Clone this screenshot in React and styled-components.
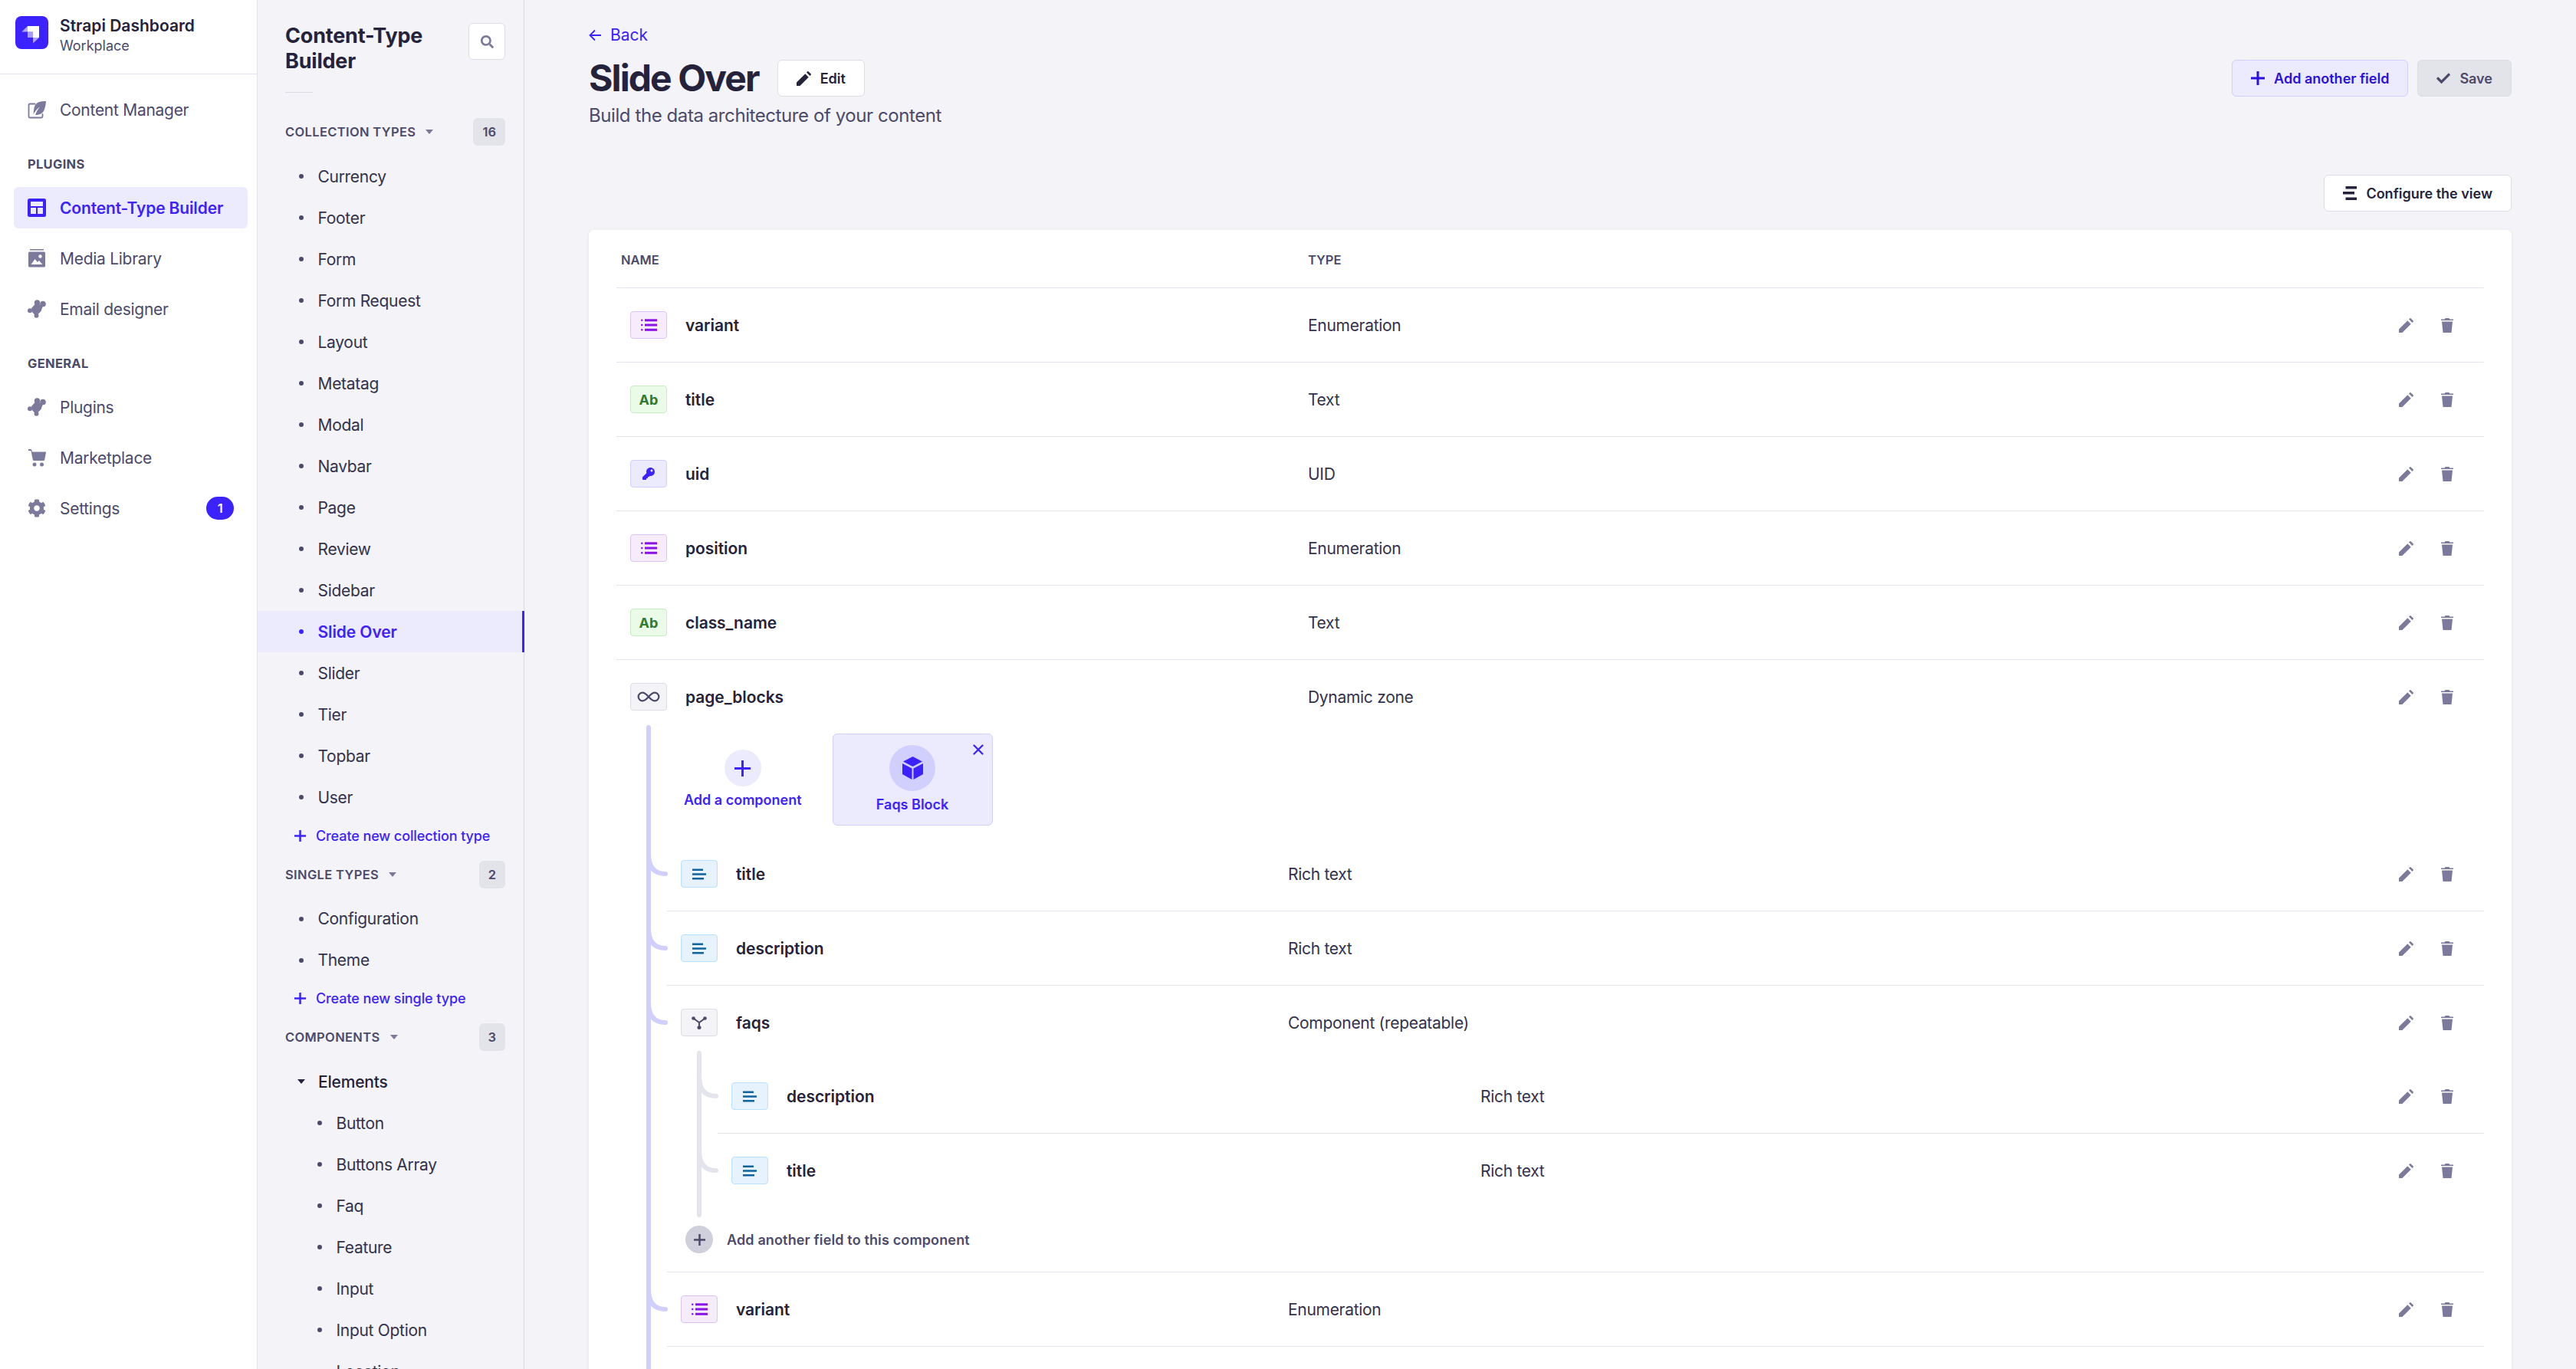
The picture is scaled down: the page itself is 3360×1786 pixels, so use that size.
import React from 'react';
import styled, { createGlobalStyle } from 'styled-components';
import { X, Infinity as InfinityIcon } from 'lucide-react';
import { FaSearch, FaKey, FaCog } from 'react-icons/fa';

const BLUE = '#3c22ff';
const INK = '#25233b';
const MUTED = '#4b4a6b';
const ICON = '#7c7a9c';
const LINE = '#e4e4ec';

const GlobalStyle = createGlobalStyle`
  html, body { margin: 0; height: 100%; overflow: hidden; }
  body { font-family: Inter, "Liberation Sans", sans-serif; color: ${INK}; background: #f3f3f8; }
  * { box-sizing: border-box; }
`;

const Page = styled.div`
  display: flex;
  height: 1786px;
  overflow: hidden;
`;

/* left nav */
const Nav = styled.nav`
  width: 336px;
  flex: none;
  background: #fff;
  border-right: 1px solid #e2e2ea;
`;

const Brand = styled.div`
  display: flex;
  align-items: center;
  gap: 15px;
  height: 97px;
  padding: 0 20px 11px;
  border-bottom: 1px solid ${LINE};
`;

const LogoBox = styled.div`
  width: 43px;
  height: 43px;
  border-radius: 8px;
  background: ${BLUE};
  svg { display: block; }
`;

const BrandText = styled.div`
  padding-top: 6px;
`;

const BrandName = styled.div`
  font-size: 21px;
  font-weight: 600;
  line-height: 28px;
`;

const BrandSub = styled.div`
  font-size: 18px;
  line-height: 24px;
  color: ${MUTED};
`;

const NavBody = styled.div`
  display: flex;
  flex-direction: column;
  gap: 12px;
  padding: 19px 12px 0 18px;
`;

const NavLabel = styled.div`
  font-size: 16.5px;
  font-weight: 700;
  line-height: 20px;
  letter-spacing: 0.3px;
  color: ${MUTED};
  padding-left: 18px;
  margin-top: 22px;
  margin-bottom: 8px;
`;

const NavItem = styled.div`
  display: flex;
  align-items: center;
  gap: 18px;
  height: 54px;
  padding: 0 18px;
  border-radius: 6px;
  font-size: 21px;
  letter-spacing: ${p => (p.$active ? '-0.15px' : '-0.28px')};
  font-weight: ${p => (p.$active ? 600 : 400)};
  color: ${p => (p.$active ? BLUE : MUTED)};
  background: ${p => (p.$active ? '#ebebfd' : 'transparent')};
  svg { flex: none; width: 24px; height: 24px; color: ${p => (p.$active ? BLUE : ICON)}; }
`;

const NavBadge = styled.span`
  margin-left: auto;
  width: 36px;
  height: 30px;
  border-radius: 15px;
  background: ${BLUE};
  color: #fff;
  font-size: 16.5px;
  font-weight: 600;
  display: flex;
  align-items: center;
  justify-content: center;
`;

/* content-type sub nav */
const SubNav = styled.aside`
  width: 348px;
  flex: none;
  border-right: 1px solid #dcdce4;
`;

const SubHead = styled.div`
  display: flex;
  justify-content: space-between;
  align-items: flex-start;
  padding: 30px 24px 0 36px;
`;

const SubTitle = styled.h2`
  margin: 0;
  font-size: 27px;
  line-height: 33px;
  font-weight: 700;
  letter-spacing: -0.2px;
`;

const SearchButton = styled.div`
  width: 48px;
  height: 48px;
  background: #fff;
  border: 1px solid #dcdce4;
  border-radius: 6px;
  display: flex;
  align-items: center;
  justify-content: center;
  color: ${ICON};
`;

const Rule = styled.div`
  width: 36px;
  height: 1px;
  background: #dcdce4;
  margin: 24px 0 33px 36px;
`;

const SectionHead = styled.div`
  display: flex;
  align-items: center;
  height: 36px;
  padding: 0 24px 0 36px;
  margin-bottom: 13px;
  font-size: 16.5px;
  font-weight: 600;
  letter-spacing: 0.35px;
  color: ${MUTED};
`;

const Caret = styled.span`
  width: 0;
  height: 0;
  margin-left: 13px;
  border-left: 5.5px solid transparent;
  border-right: 5.5px solid transparent;
  border-top: 6px solid ${p => (p.$dark ? INK : ICON)};
`;

const CountBadge = styled.span`
  margin-left: auto;
  min-width: 34px;
  padding: 0 12px;
  height: 36px;
  border-radius: 6px;
  background: #e3e3ea;
  font-size: 16.5px;
  font-weight: 600;
  letter-spacing: 0;
  display: flex;
  align-items: center;
  justify-content: center;
`;

const TypeItem = styled.div`
  display: flex;
  align-items: center;
  height: 54px;
  padding-left: ${p => p.$indent}px;
  font-size: 21px;
  letter-spacing: ${p => (p.$active ? '-0.1px' : '-0.3px')};
  font-weight: ${p => (p.$active ? 600 : 400)};
  color: ${p => (p.$active ? BLUE : '#32324d')};
  background: ${p => (p.$active ? '#ebebfd' : 'transparent')};
  border-right: ${p => (p.$active ? `3px solid ${BLUE}` : 'none')};
  margin-right: ${p => (p.$active ? '-1px' : '0')};
`;

const Bullet = styled.span`
  width: 6px;
  height: 6px;
  border-radius: 50%;
  margin-right: 18.5px;
  background: ${p => (p.$active ? BLUE : MUTED)};
`;

const CreateLink = styled.div`
  display: flex;
  align-items: center;
  gap: 13px;
  height: 30px;
  margin: 8px 0 17.5px;
  padding-left: 48px;
  font-size: 18px;
  font-weight: 500;
  letter-spacing: -0.1px;
  color: ${BLUE};
`;

const Group = styled.div`
  display: flex;
  align-items: center;
  height: 54px;
  padding-left: 52px;
  font-size: 21px;
  font-weight: 500;
  letter-spacing: -0.2px;
  span { margin: 0 17px 0 0; }
`;

/* main */
const Main = styled.main`
  flex: 1;
  min-width: 0;
  padding: 30px 84px 0;
`;

const BackLink = styled.div`
  display: flex;
  align-items: center;
  gap: 12px;
  height: 31px;
  font-size: 21px;
  color: ${BLUE};
`;

const TitleBar = styled.div`
  display: flex;
  align-items: center;
  gap: 24px;
  margin-top: 17px;
`;

const Title = styled.h1`
  margin: 0;
  font-size: 48px;
  line-height: 48px;
  font-weight: 700;
  letter-spacing: -1.9px;
`;

const Button = styled.div`
  display: flex;
  align-items: center;
  gap: 12px;
  height: 48px;
  padding: 0 24px;
  border-radius: 6px;
  border: 1px solid ${p => p.$border || '#dcdce4'};
  background: ${p => p.$bg || '#fff'};
  color: ${p => p.$color || INK};
  font-size: 18px;
  font-weight: 600;
  white-space: nowrap;
`;

const Actions = styled.div`
  margin-left: auto;
  display: flex;
  gap: 12px;
`;

const Subtitle = styled.div`
  margin-top: 8px;
  font-size: 24px;
  line-height: 34px;
  letter-spacing: -0.42px;
  color: ${MUTED};
`;

const ViewBar = styled.div`
  display: flex;
  justify-content: flex-end;
  margin: 60px 0 24px;
`;

const Card = styled.section`
  background: #fff;
  border-radius: 6px;
  padding: 0 36px;
  box-shadow: 0 1px 4px rgba(33, 33, 52, 0.08);
`;

const TableHead = styled.div`
  display: flex;
  align-items: center;
  height: 76px;
  padding: 2px 0 0 6px;
  border-bottom: 1px solid ${LINE};
  font-size: 16.5px;
  font-weight: 600;
  color: ${MUTED};
`;

const HeadCell = styled.div`
  width: ${p => p.$w}px;
`;

const Row = styled.div`
  position: relative;
  display: flex;
  align-items: center;
  height: ${p => p.$h || 97}px;
  padding-left: 18px;
  border-bottom: ${p => (p.$last ? 'none' : `1px solid ${LINE}`)};
  font-size: 21px;
`;

const NameCell = styled.div`
  display: flex;
  align-items: center;
  gap: 24px;
  width: ${p => p.$w}px;
  font-weight: 600;
  letter-spacing: -0.05px;
`;

const TypeCell = styled.div`
  color: #32324d;
  letter-spacing: -0.3px;
`;

const RowActions = styled.div`
  margin-left: auto;
  display: flex;
  align-items: center;
  gap: 36px;
  padding-right: 40px;
  color: ${ICON};
`;

const palette = {
  enum: ['#f6ecfc', '#e0c1f4', '#8a12e6'],
  text: ['#eafbe7', '#c6f0c2', '#2f7a33'],
  uid: ['#ebebfd', '#d0cffe', BLUE],
  rich: ['#e6f3fe', '#b8e1ff', '#0f639f'],
  plain: ['#f3f3f8', '#dcdce4', MUTED],
};

const FieldBadge = styled.span`
  display: flex;
  align-items: center;
  justify-content: center;
  flex: none;
  width: 48px;
  height: 36px;
  border-radius: 4px;
  border: 1.5px solid ${p => palette[p.$kind][1]};
  background: ${p => palette[p.$kind][0]};
  color: ${p => palette[p.$kind][2]};
  font-size: 18px;
  font-weight: 700;
  letter-spacing: 0;
`;

const Tree = styled.div`
  position: relative;
  margin-left: ${p => p.$left}px;
  padding-bottom: ${p => p.$bottom || 0}px;
`;

const TreeLine = styled.div`
  position: absolute;
  left: -27px;
  top: -11px;
  bottom: ${p => p.$end}px;
  width: 6px;
  border-radius: 3px;
  background: ${p => p.$color};
`;

const Elbow = styled.svg`
  position: absolute;
  left: -27px;
  top: 22px;
`;

const PickerRow = styled.div`
  display: flex;
  align-items: flex-start;
  gap: 40px;
  height: 135px;
  padding-left: 22px;
`;

const AddComponent = styled.div`
  display: flex;
  flex-direction: column;
  align-items: center;
  gap: 6px;
  padding-top: 21px;
  font-size: 18px;
  line-height: 24px;
  font-weight: 600;
  color: ${BLUE};
`;

const AddCircle = styled.span`
  width: 48px;
  height: 48px;
  border-radius: 50%;
  background: #ebebfd;
  display: flex;
  align-items: center;
  justify-content: center;
`;

const PickedCard = styled.div`
  position: relative;
  display: flex;
  flex-direction: column;
  align-items: center;
  gap: 6px;
  width: 209px;
  height: 120px;
  padding-top: 14px;
  border: 1.5px solid #d0cffe;
  border-radius: 6px;
  background: #ebebfd;
  font-size: 18px;
  line-height: 24px;
  font-weight: 600;
  color: ${BLUE};
`;

const CubeCircle = styled.span`
  width: 60px;
  height: 60px;
  border-radius: 50%;
  background: #d0cffe;
  display: flex;
  align-items: center;
  justify-content: center;
`;

const CloseMark = styled.span`
  position: absolute;
  top: 9px;
  right: 7px;
  display: flex;
`;

const AddFieldRow = styled.div`
  display: flex;
  align-items: center;
  gap: 18px;
  height: 85px;
  padding-left: 24px;
  border-bottom: 1px solid ${LINE};
  font-size: 18px;
  font-weight: 600;
  letter-spacing: 0.14px;
  color: ${MUTED};
`;

const GreyCircle = styled.span`
  width: 36px;
  height: 36px;
  border-radius: 50%;
  background: #d0cfdc;
  display: flex;
  align-items: center;
  justify-content: center;
`;

/* icons */
const LogoMark = () => (
  <svg width="43" height="43" viewBox="0 0 43 43">
    <path d="M16 13h15v15h-8v-7.5h-7z" fill="#fff" />
    <path d="M16 13v7.5H8.3z" fill="#fff" opacity=".6" />
    <rect x="16" y="20.5" width="7" height="7.5" fill="#fff" opacity=".55" />
    <path d="M23 28h8l-8 7.5z" fill="#fff" opacity=".6" />
  </svg>
);

const FeatherIcon = () => (
  <svg viewBox="0 0 24 24" fill="none">
    <path d="M9.5 4.5H3A1.5 1.5 0 0 0 1.5 6v15A1.5 1.500 0 0 0 3 22.5h15a1.5 1.5 0 0 0 1.5-1.5v-3" stroke="currentColor" strokeWidth="1.8" strokeLinecap="round" />
    <path d="M24 1c-6 0-12.5.5-14.8 6.5C8 10.5 8 14 7.5 18.500 9.5 14.500 12 11 16 8.500c-2.500 3-4.500 6-6 10.500 6.500 0 10-2 12-7.500C23.200 8 23.800 4.500 24 1z" fill="currentColor" />
  </svg>
);

const LayoutIcon = () => (
  <svg viewBox="0 0 24 24">
    <rect width="24" height="24" rx="2.5" fill="currentColor" />
    <rect x="4" y="4" width="16" height="6" fill="#ebebfd" />
    <rect x="4" y="12" width="7" height="8" fill="#ebebfd" />
    <rect x="13" y="12" width="7" height="8" fill="#ebebfd" />
  </svg>
);

const MediaIcon = () => (
  <svg viewBox="0 0 24 24">
    <rect x="3" y="0" width="18" height="1.5" fill="currentColor" />
    <rect x="1" y="3.5" width="22" height="20" rx="1.5" fill="currentColor" />
    <path d="M4.500 20l5-7 3.500 4 2-2 4.500 5z" fill="#fff" />
    <circle cx="16.5" cy="9.5" r="2.2" fill="#fff" />
  </svg>
);

const PuzzleIcon = () => (
  <svg viewBox="0 0 24 24" fill="currentColor">
    <path d="M5 11l6-6.500L20 8l-2.500 7-4 4h-5L6 16z" />
    <circle cx="12.500" cy="4" r="3.700" />
    <circle cx="20" cy="5.500" r="3.800" />
    <circle cx="3" cy="14.300" r="3" />
    <circle cx="11.500" cy="20.800" r="3" />
  </svg>
);

const CartIcon = () => (
  <svg viewBox="0 0 24 24">
    <path d="M1 1h2.500c1 0 1.700.5 2 1.500L6 4.500h17.500c.4 0 .6.300.5.700l-1.800 9.500c-.2.800-.8 1.300-1.600 1.300H8.500c-.8 0-1.500-.5-1.700-1.300L4.500 3.400c-.1-.3-.3-.4-.6-.4H1z" fill="currentColor" />
    <circle cx="9" cy="21" r="2.500" fill="currentColor" />
    <circle cx="18.500" cy="21" r="2.500" fill="currentColor" />
  </svg>
);

const PlusMark = ({ size, weight = 3, color = 'currentColor' }) => (
  <svg width={size} height={size} viewBox={`0 0 ${size} ${size}`} fill={color}>
    <rect x="0" y={(size - weight) / 2} width={size} height={weight} />
    <rect x={(size - weight) / 2} y="0" width={weight} height={size} />
  </svg>
);

const CheckMark = () => (
  <svg width="18" height="18" viewBox="0 0 18 18" fill="none" stroke="currentColor" strokeWidth="3.2">
    <path d="M1 8.500l5.500 5.500L17 3.500" />
  </svg>
);

const BackArrow = () => (
  <svg width="16" height="16" viewBox="0 0 16 16" fill="none" stroke="currentColor" strokeWidth="1.8">
    <path d="M16 8H1.800M8 1.500 1.500 8 8 14.500" />
  </svg>
);

const Pencil = ({ size = 19, color = 'currentColor' }) => (
  <svg width={size} height={size} viewBox="0 0 19 19" fill={color}>
    <path d="M0 19v-4.400L11.300 3.300l4.400 4.400L4.400 19z" />
    <path d="M13 1.600 14.400.2c.3-.3.700-.3 1 0l3.400 3.400c.3.300.3.700 0 1L17.400 6z" />
  </svg>
);

const Trash = () => (
  <svg width="16" height="19" viewBox="0 0 16 19" fill="currentColor">
    <path d="M5.500 0h5l.8 1.500H16V3H0V1.500h4.700z" />
    <path d="M1 4.500h14L13.500 19h-11z" />
  </svg>
);

const ListIcon = () => (
  <svg width="21" height="16" viewBox="0 0 21 16" fill="currentColor">
    <rect x="0" y="0.5" width="2.5" height="2.5" rx="1.2" />
    <rect x="0" y="6.7" width="2.5" height="2.5" rx="1.2" />
    <rect x="0" y="13" width="2.5" height="2.5" rx="1.2" />
    <rect x="5" y="0.3" width="16" height="3" />
    <rect x="5" y="6.5" width="16" height="3" />
    <rect x="5" y="12.8" width="16" height="3" />
  </svg>
);

const RichIcon = () => (
  <svg width="18" height="15" viewBox="0 0 18 15" fill="currentColor">
    <rect x="0" y="0.5" width="14" height="2.5" />
    <rect x="0" y="6.25" width="18" height="2.5" />
    <rect x="0" y="12" width="15" height="2.5" />
  </svg>
);

const BranchIcon = () => (
  <svg width="20" height="17" viewBox="0 0 20 17" fill="none" stroke="currentColor" strokeWidth="2">
    <path d="M2.500 2.500 10 8l7.500-5.500M10 8v6.500" />
    <circle cx="2.5" cy="2.5" r="2.3" fill="currentColor" stroke="none" />
    <circle cx="17.5" cy="2.5" r="2.3" fill="currentColor" stroke="none" />
    <circle cx="10" cy="14.5" r="2.5" fill="currentColor" stroke="none" />
  </svg>
);

const CubeIcon = () => (
  <svg width="27" height="30" viewBox="0 0 27 30" fill={BLUE}>
    <path d="M13.500 0l12.500 6.500-12.500 6.500L1 6.500z" />
    <path d="M0 9l12.500 6.500V30L0 23z" />
    <path d="M27 9l-12.500 6.500V30L27 23z" />
  </svg>
);

const ConfigureIcon = () => (
  <svg width="18" height="18" viewBox="0 0 18 18" fill={INK}>
    <rect x="3.5" y="0" width="14.5" height="3.5" />
    <rect x="0" y="7" width="15" height="3.5" />
    <rect x="3.5" y="14.5" width="14.5" height="3.5" />
  </svg>
);

const ElbowLine = ({ color }) => (
  <Elbow width="30" height="32" viewBox="0 0 30 32" fill="none">
    <path d="M3 0c0 16 6 26 22 26" stroke={color} strokeWidth="6" strokeLinecap="round" />
  </Elbow>
);

const fieldIcon = {
  enum: <ListIcon />,
  text: 'Ab',
  uid: <FaKey size={16} />,
  rich: <RichIcon />,
  dyn: <InfinityIcon size={32} strokeWidth={1.7} />,
  comp: <BranchIcon />,
};

const kindOf = { dyn: 'plain', comp: 'plain' };

const Field = ({ icon, name, type, nameW, elbow, last, h }) => (
  <Row $last={last} $h={h}>
    {elbow && <ElbowLine color={elbow} />}
    <NameCell $w={nameW}>
      <FieldBadge $kind={kindOf[icon] || icon}>{fieldIcon[icon]}</FieldBadge>
      {name}
    </NameCell>
    <TypeCell>{type}</TypeCell>
    <RowActions>
      <Pencil />
      <Trash />
    </RowActions>
  </Row>
);

const collectionTypes = ['Currency', 'Footer', 'Form', 'Form Request', 'Layout', 'Metatag', 'Modal', 'Navbar', 'Page', 'Review', 'Sidebar', 'Slide Over', 'Slider', 'Tier', 'Topbar', 'User'];
const singleTypes = ['Configuration', 'Theme'];
const elements = ['Button', 'Buttons Array', 'Faq', 'Feature', 'Input', 'Input Option', 'Location'];

const topFields = [
  ['enum', 'variant', 'Enumeration'],
  ['text', 'title', 'Text'],
  ['uid', 'uid', 'UID'],
  ['enum', 'position', 'Enumeration'],
  ['text', 'class_name', 'Text'],
];

const PURPLE = '#d0cffe';
const GREY = '#e4e4ec';

export default function App() {
  return (
    <Page>
      <GlobalStyle />
      <Nav>
        <Brand>
          <LogoBox><LogoMark /></LogoBox>
          <BrandText>
            <BrandName>Strapi Dashboard</BrandName>
            <BrandSub>Workplace</BrandSub>
          </BrandText>
        </Brand>
        <NavBody>
          <NavItem><FeatherIcon />Content Manager</NavItem>
          <NavLabel>PLUGINS</NavLabel>
          <NavItem $active><LayoutIcon />Content-Type Builder</NavItem>
          <NavItem><MediaIcon />Media Library</NavItem>
          <NavItem><PuzzleIcon />Email designer</NavItem>
          <NavLabel>GENERAL</NavLabel>
          <NavItem><PuzzleIcon />Plugins</NavItem>
          <NavItem><CartIcon />Marketplace</NavItem>
          <NavItem><FaCog />Settings<NavBadge>1</NavBadge></NavItem>
        </NavBody>
      </Nav>

      <SubNav>
        <SubHead>
          <SubTitle>Content-Type<br />Builder</SubTitle>
          <SearchButton><FaSearch size={17} /></SearchButton>
        </SubHead>
        <Rule />
        <SectionHead>COLLECTION TYPES<Caret /><CountBadge>16</CountBadge></SectionHead>
        {collectionTypes.map(t => (
          <TypeItem key={t} $indent={54} $active={t === 'Slide Over'}>
            <Bullet $active={t === 'Slide Over'} />{t}
          </TypeItem>
        ))}
        <CreateLink><PlusMark size={15} weight={2.5} />Create new collection type</CreateLink>
        <SectionHead>SINGLE TYPES<Caret /><CountBadge>2</CountBadge></SectionHead>
        {singleTypes.map(t => (
          <TypeItem key={t} $indent={54}><Bullet />{t}</TypeItem>
        ))}
        <CreateLink><PlusMark size={15} weight={2.5} />Create new single type</CreateLink>
        <SectionHead>COMPONENTS<Caret /><CountBadge>3</CountBadge></SectionHead>
        <Group><Caret $dark />Elements</Group>
        {elements.map(t => (
          <TypeItem key={t} $indent={78}><Bullet />{t}</TypeItem>
        ))}
      </SubNav>

      <Main>
        <BackLink><BackArrow />Back</BackLink>
        <TitleBar>
          <Title>Slide Over</Title>
          <Button><Pencil size={19} color={INK} />Edit</Button>
          <Actions>
            <Button $bg="#ebebfd" $border="#d0cffe" $color="#2a10e0"><PlusMark size={18} />Add another field</Button>
            <Button $bg="#e3e3ea" $border="#dcdce4" $color={MUTED}><CheckMark />Save</Button>
          </Actions>
        </TitleBar>
        <Subtitle>Build the data architecture of your content</Subtitle>
        <ViewBar>
          <Button><ConfigureIcon />Configure the view</Button>
        </ViewBar>
        <Card>
          <TableHead>
            <HeadCell $w={896}>NAME</HeadCell>
            <HeadCell $w={100}>TYPE</HeadCell>
          </TableHead>
          {topFields.map(([icon, name, type]) => (
            <Field key={name} icon={icon} name={name} type={type} nameW={884} />
          ))}
          <Field icon="dyn" name="page_blocks" type="Dynamic zone" nameW={884} h={96} last />
          <Tree $left={66} $bottom={120}>
            <TreeLine $color={PURPLE} $end={0} />
            <PickerRow>
              <AddComponent>
                <AddCircle><PlusMark size={21} /></AddCircle>
                Add a component
              </AddComponent>
              <PickedCard>
                <CubeCircle><CubeIcon /></CubeCircle>
                Faqs Block
                <CloseMark><X size={22} strokeWidth={2.5} /></CloseMark>
              </PickedCard>
            </PickerRow>
            <Field icon="rich" name="title" type="Rich text" nameW={792} elbow={PURPLE} />
            <Field icon="rich" name="description" type="Rich text" nameW={792} elbow={PURPLE} />
            <Field icon="comp" name="faqs" type="Component (repeatable)" nameW={792} elbow={PURPLE} h={96} last />
            <Tree $left={66}>
              <TreeLine $color={GREY} $end={-13} />
              <Field icon="rich" name="description" type="Rich text" nameW={977} elbow={GREY} />
              <Field icon="rich" name="title" type="Rich text" nameW={977} elbow={GREY} h={96} last />
            </Tree>
            <AddFieldRow>
              <GreyCircle><PlusMark size={15} weight={2.5} color={MUTED} /></GreyCircle>
              Add another field to this component
            </AddFieldRow>
            <Field icon="enum" name="variant" type="Enumeration" nameW={792} elbow={PURPLE} />
          </Tree>
        </Card>
      </Main>
    </Page>
  );
}
